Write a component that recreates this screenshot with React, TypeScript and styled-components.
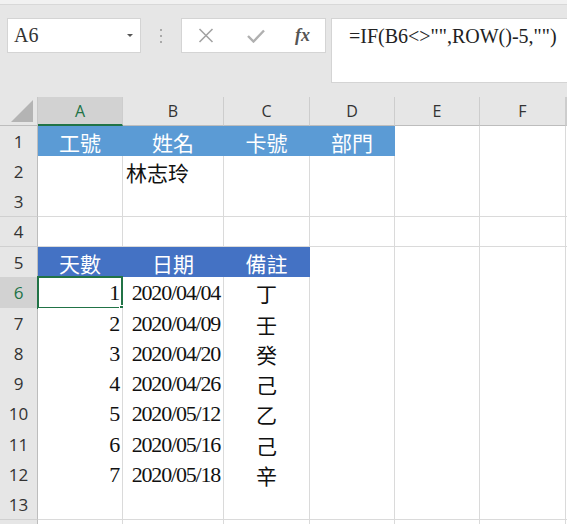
import React from 'react';
import styled, { createGlobalStyle } from 'styled-components';

const GREEN = '#217346';
const LIGHT_BLUE = '#5b9bd5';
const DARK_BLUE = '#4472c4';
const GRID = '#dadada';
const COLUMNS = '38px 85px 101px 86px 85px 85px 86px 1fr';

const GlobalStyle = createGlobalStyle`
  html, body {
    margin: 0;
    padding: 0;
    background: #e6e6e6;
    overflow: hidden;
  }
  * {
    box-sizing: border-box;
  }
`;

const Window = styled.div`
  width: 567px;
  height: 524px;
  overflow: hidden;
  background: #e6e6e6;
  font-family: 'Liberation Serif', 'Noto Sans CJK TC', serif;
`;

const TopStrip = styled.div`
  height: 5px;
  background: #f1f1f1;
  border-bottom: 1px solid #d8d8d8;
`;

const FormulaRow = styled.div`
  height: 92px;
  display: flex;
  align-items: flex-start;
  padding: 13px 0 0 7px;
`;

const NameBox = styled.div`
  width: 134px;
  height: 35px;
  background: #fff;
  border: 1px solid #d4d4d4;
  display: flex;
  align-items: center;
  justify-content: space-between;
  padding: 0 7px 0 6px;
  font-size: 20px;
  color: #333;
`;

const DropArrow = styled.span`
  width: 0;
  height: 0;
  border-left: 3px solid transparent;
  border-right: 3px solid transparent;
  border-top: 3px solid #555;
`;

const Grip = styled.div`
  width: 40px;
  height: 35px;
  display: flex;
  flex-direction: column;
  align-items: center;
  justify-content: center;
  gap: 4px;
`;

const GripDot = styled.span`
  width: 2px;
  height: 2px;
  background: #a9a9a9;
`;

const FxBox = styled.div`
  width: 145px;
  height: 35px;
  background: #fff;
  border: 1px solid #d4d4d4;
  display: flex;
  align-items: center;
  padding-left: 16px;
  gap: 33px;
`;

const FxLabel = styled.span`
  font-family: 'Liberation Serif', serif;
  font-style: italic;
  font-weight: bold;
  font-size: 18px;
  color: #555;
  margin-left: -3px;
`;

const FormulaInput = styled.div`
  flex: 1;
  height: 65px;
  margin-left: 5px;
  margin-right: -4px;
  background: #fff;
  border: 1px solid #d4d4d4;
  padding: 6px 0 0 17px;
  font-size: 20px;
  color: #222;
  white-space: nowrap;
`;

const SheetRow = styled.div<{ $h: number }>`
  display: grid;
  grid-template-columns: ${COLUMNS};
  height: ${(p) => p.$h}px;
`;

const Corner = styled.div`
  background: #e6e6e6;
  border-right: 1px solid #c8c8c8;
  border-bottom: 1px solid #bdbdbd;
  display: flex;
  align-items: flex-end;
  justify-content: flex-end;
  padding: 0 4px 3px 0;
`;

const CornerTriangle = styled.span`
  width: 0;
  height: 0;
  border-left: 22px solid transparent;
  border-bottom: 22px solid #b4b4b4;
`;

const ColHead = styled.div<{ $active?: boolean }>`
  display: flex;
  align-items: center;
  justify-content: center;
  font-family: 'Open Sans', 'Noto Sans', sans-serif;
  font-size: 16px;
  color: ${(p) => (p.$active ? GREEN : '#333')};
  background: ${(p) => (p.$active ? '#d2d2d2' : '#e6e6e6')};
  border-right: 1px solid #cdcdcd;
  border-bottom: ${(p) => (p.$active ? `2px solid ${GREEN}` : '1px solid #bdbdbd')};
  padding-top: ${(p) => (p.$active ? '1px' : '0')};
`;

const RowHead = styled.div<{ $active?: boolean; $line?: string }>`
  display: flex;
  align-items: center;
  justify-content: center;
  font-family: 'Open Sans', 'Noto Sans', sans-serif;
  font-size: 17px;
  color: ${(p) => (p.$active ? GREEN : '#333')};
  background: ${(p) => (p.$active ? '#d2d2d2' : '#e6e6e6')};
  border-right: 1px solid #bdbdbd;
  border-bottom: 1px solid ${(p) => p.$line || '#d0d0d0'};
`;

const Cell = styled.div<{
  $fill?: string;
  $align?: 'left' | 'right' | 'center';
  $line?: string;
  $latin?: boolean;
}>`
  position: relative;
  display: flex;
  align-items: center;
  justify-content: ${(p) =>
    p.$align === 'right' ? 'flex-end' : p.$align === 'center' ? 'center' : 'flex-start'};
  padding: 1px 3px 0 3px;
  white-space: nowrap;
  font-size: ${(p) => (p.$latin ? '22px' : '21px')};
  letter-spacing: ${(p) => (p.$latin ? '-1.2px' : '0')};
  color: ${(p) => (p.$fill ? '#fff' : '#111')};
  background: ${(p) => p.$fill || '#fff'};
  border-right: 1px solid ${(p) => p.$fill || GRID};
  border-bottom: 1px solid ${(p) => p.$line || p.$fill || GRID};
`;

const Selection = styled.div`
  position: absolute;
  top: -1px;
  left: -1px;
  right: -1px;
  bottom: -1px;
  border: 2px solid ${GREEN};
  pointer-events: none;
`;

const FillHandle = styled.span`
  position: absolute;
  right: -5px;
  bottom: -5px;
  width: 7px;
  height: 7px;
  background: ${GREEN};
  border: 1px solid #fff;
`;

type CellData = {
  text?: string;
  fill?: string;
  align?: 'left' | 'right' | 'center';
  latin?: boolean;
};

type RowData = { n: number; h: number; cells?: CellData[]; freeze?: boolean; label?: boolean };

const head = (text: string, fill: string): CellData => ({ text, fill, align: 'center' });

const record = (n: string, date: string, note: string): CellData[] => [
  { text: n, align: 'right', latin: true },
  { text: date, align: 'right', latin: true },
  { text: note, align: 'center' },
];

const rows: RowData[] = [
  {
    n: 1,
    h: 30,
    cells: [
      head('工號', LIGHT_BLUE),
      head('姓名', LIGHT_BLUE),
      head('卡號', LIGHT_BLUE),
      head('部門', LIGHT_BLUE),
    ],
  },
  { n: 2, h: 31, cells: [{}, { text: '林志玲', align: 'left' }] },
  { n: 3, h: 30 },
  { n: 4, h: 30 },
  {
    n: 5,
    h: 30,
    freeze: true,
    cells: [head('天數', DARK_BLUE), head('日期', DARK_BLUE), head('備註', DARK_BLUE)],
  },
  { n: 6, h: 31, cells: record('1', '2020/04/04', '丁') },
  { n: 7, h: 30, cells: record('2', '2020/04/09', '壬') },
  { n: 8, h: 30, cells: record('3', '2020/04/20', '癸') },
  { n: 9, h: 30, cells: record('4', '2020/04/26', '己') },
  { n: 10, h: 31, cells: record('5', '2020/05/12', '乙') },
  { n: 11, h: 30, cells: record('6', '2020/05/16', '己') },
  { n: 12, h: 30, cells: record('7', '2020/05/18', '辛') },
  { n: 13, h: 31 },
  // row 14 only peeks in under the window edge; its number is not visible
  { n: 14, h: 30, label: false },
];

const letters = ['A', 'B', 'C', 'D', 'E', 'F', ''];

function CancelIcon() {
  return (
    <svg width="16" height="15" viewBox="0 0 16 15">
      <path d="M1.5 1 L14.5 14 M14.5 1 L1.5 14" stroke="#a3a3a3" strokeWidth="1.6" fill="none" />
    </svg>
  );
}

function EnterIcon() {
  return (
    <svg width="18" height="14" viewBox="0 0 18 14">
      <path d="M1 7 L6.5 12.5 L17 1.5" stroke="#b0b0b0" strokeWidth="2.4" fill="none" />
    </svg>
  );
}

export default function App() {
  return (
    <Window>
      <GlobalStyle />
      <TopStrip />
      <FormulaRow>
        <NameBox>
          <span>A6</span>
          <DropArrow />
        </NameBox>
        <Grip>
          <GripDot />
          <GripDot />
          <GripDot />
        </Grip>
        <FxBox>
          <CancelIcon />
          <EnterIcon />
          <FxLabel>fx</FxLabel>
        </FxBox>
        <FormulaInput>=IF(B6&lt;&gt;"",ROW()-5,"")</FormulaInput>
      </FormulaRow>

      <SheetRow $h={29}>
        <Corner>
          <CornerTriangle />
        </Corner>
        {letters.map((l, i) => (
          <ColHead key={i} $active={l === 'A'}>
            {l}
          </ColHead>
        ))}
      </SheetRow>

      {rows.map((row) => {
        const line = row.freeze ? '#9e9e9e' : undefined;
        return (
          <SheetRow key={row.n} $h={row.h}>
            <RowHead $active={row.n === 6} $line={line}>
              {row.label === false ? '' : row.n}
            </RowHead>
            {letters.map((_, c) => {
              const cell = row.cells?.[c] ?? {};
              const selected = row.n === 6 && c === 0;
              return (
                <Cell
                  key={c}
                  $fill={cell.fill}
                  $align={cell.align}
                  $latin={cell.latin}
                  $line={line}
                >
                  {cell.text}
                  {selected && (
                    <Selection>
                      <FillHandle />
                    </Selection>
                  )}
                </Cell>
              );
            })}
          </SheetRow>
        );
      })}
    </Window>
  );
}
